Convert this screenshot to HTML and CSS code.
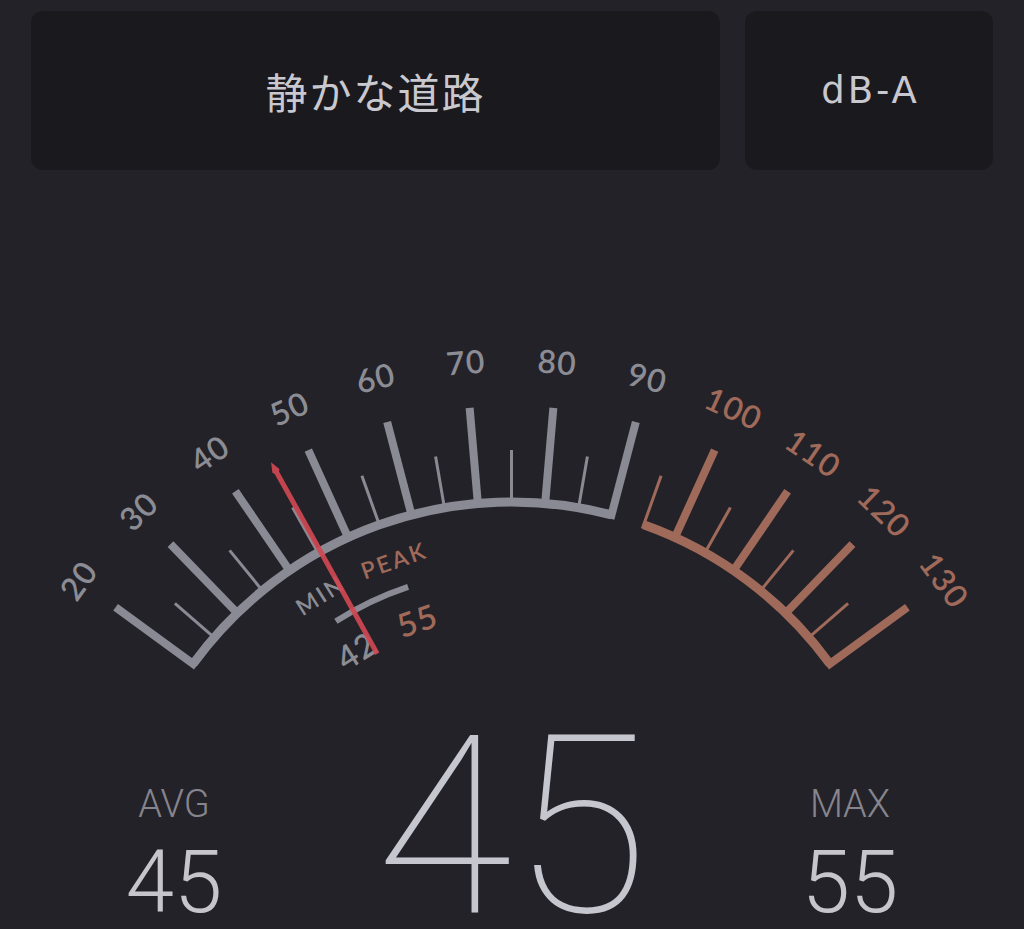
FILE: index.html
```html
<!DOCTYPE html>
<html lang="ja">
<head>
<meta charset="utf-8">
<title>騒音計</title>
<link rel="stylesheet" href="styles.css">
</head>
<body>
<div class="app">
  <header class="top">
    <div class="card place">静かな道路</div>
    <div class="card unit">dB-A</div>
  </header>

  <svg class="gauge" viewBox="0 170 1024 557" width="1024" height="557" xmlns="http://www.w3.org/2000/svg">
    <g class="scale gray">
      <path class="arc" d="M193.1 663.9 A394 394 0 0 1 611.5 514.9"/>
      <line class="major" x1="511.5" y1="506" x2="511.5" y2="406" transform="rotate(-53.9 511.5 896)"/>
      <line class="minor" x1="511.5" y1="506" x2="511.5" y2="450" transform="rotate(-49 511.5 896)"/>
      <line class="major" x1="511.5" y1="506" x2="511.5" y2="406" transform="rotate(-44.1 511.5 896)"/>
      <line class="minor" x1="511.5" y1="506" x2="511.5" y2="450" transform="rotate(-39.2 511.5 896)"/>
      <line class="major" x1="511.5" y1="506" x2="511.5" y2="406" transform="rotate(-34.3 511.5 896)"/>
      <line class="minor" x1="511.5" y1="506" x2="511.5" y2="450" transform="rotate(-29.4 511.5 896)"/>
      <line class="major" x1="511.5" y1="506" x2="511.5" y2="406" transform="rotate(-24.5 511.5 896)"/>
      <line class="minor" x1="511.5" y1="506" x2="511.5" y2="450" transform="rotate(-19.6 511.5 896)"/>
      <line class="major" x1="511.5" y1="506" x2="511.5" y2="406" transform="rotate(-14.7 511.5 896)"/>
      <line class="minor" x1="511.5" y1="506" x2="511.5" y2="450" transform="rotate(-9.8 511.5 896)"/>
      <line class="major" x1="511.5" y1="506" x2="511.5" y2="406" transform="rotate(-4.9 511.5 896)"/>
      <line class="minor" x1="511.5" y1="506" x2="511.5" y2="450"/>
      <line class="major" x1="511.5" y1="506" x2="511.5" y2="406" transform="rotate(4.9 511.5 896)"/>
      <line class="minor" x1="511.5" y1="506" x2="511.5" y2="450" transform="rotate(9.8 511.5 896)"/>
      <line class="major" x1="511.5" y1="506" x2="511.5" y2="406" transform="rotate(14.7 511.5 896)"/>
      <text x="511.5" y="372" transform="rotate(-53.9 511.5 896)">20</text>
      <text x="511.5" y="372" transform="rotate(-44.1 511.5 896)">30</text>
      <text x="511.5" y="372" transform="rotate(-34.3 511.5 896)">40</text>
      <text x="511.5" y="372" transform="rotate(-24.5 511.5 896)">50</text>
      <text x="511.5" y="372" transform="rotate(-14.7 511.5 896)">60</text>
      <text x="511.5" y="372" transform="rotate(-4.9 511.5 896)">70</text>
      <text x="511.5" y="372" transform="rotate(4.9 511.5 896)">80</text>
      <text x="511.5" y="372" transform="rotate(14.7 511.5 896)">90</text>
    </g>
    <g class="scale warm">
      <path class="arc" d="M643.7 524.8 A394 394 0 0 1 829.9 663.9"/>
      <line class="minor" x1="511.5" y1="506" x2="511.5" y2="450" transform="rotate(19.6 511.5 896)"/>
      <line class="major" x1="511.5" y1="506" x2="511.5" y2="406" transform="rotate(24.5 511.5 896)"/>
      <line class="minor" x1="511.5" y1="506" x2="511.5" y2="450" transform="rotate(29.4 511.5 896)"/>
      <line class="major" x1="511.5" y1="506" x2="511.5" y2="406" transform="rotate(34.3 511.5 896)"/>
      <line class="minor" x1="511.5" y1="506" x2="511.5" y2="450" transform="rotate(39.2 511.5 896)"/>
      <line class="major" x1="511.5" y1="506" x2="511.5" y2="406" transform="rotate(44.1 511.5 896)"/>
      <line class="minor" x1="511.5" y1="506" x2="511.5" y2="450" transform="rotate(49 511.5 896)"/>
      <line class="major" x1="511.5" y1="506" x2="511.5" y2="406" transform="rotate(53.9 511.5 896)"/>
      <text x="511.5" y="372" transform="rotate(24.5 511.5 896)">100</text>
      <text x="511.5" y="372" transform="rotate(34.3 511.5 896)">110</text>
      <text x="511.5" y="372" transform="rotate(44.1 511.5 896)">120</text>
      <text x="511.5" y="372" transform="rotate(53.9 511.5 896)">130</text>
    </g>

    <g class="range">
      <path class="range-arc" d="M335.9 621.3 A326 326 0 0 1 408.1 586.9"/>
      <text class="tag gray-t" x="511.5" y="548" transform="rotate(-32.4 511.5 896)">MIN</text>
      <text class="tag warm-t" x="511.5" y="549" transform="rotate(-19.3 511.5 896)">PEAK</text>
      <text class="val gray-t" x="511.5" y="618" transform="rotate(-32.3 511.5 896)">42</text>
      <text class="val warm-t" x="511.5" y="617" transform="rotate(-18.9 511.5 896)">55</text>
    </g>

    <polygon class="needle" points="509 619 514 619 514 412 515.5 410 511.5 400 507.5 410 509 412" transform="rotate(-29 511.5 896)"/>
  </svg>

  <section class="stats">
    <div class="stat">
      <div class="stat-label">AVG</div>
      <div class="stat-value">45</div>
    </div>
    <div class="current">45</div>
    <div class="stat">
      <div class="stat-label">MAX</div>
      <div class="stat-value">55</div>
    </div>
  </section>
</div>
</body>
</html>
```

FILE: styles.css
```css
html, body {
  margin: 0;
  padding: 0;
}

body {
  background: #232228;
  font-family: Roboto, "Liberation Sans", sans-serif;
}

.app {
  display: flex;
  flex-direction: column;
}

.top {
  display: flex;
  gap: 25px;
  padding: 11px 31px 0 31px;
}

.card {
  height: 159px;
  border-radius: 12px;
  background: #1a191e;
  color: #c9c8ce;
  display: flex;
  align-items: center;
  justify-content: center;
}

.place {
  flex: 1;
  font-family: "Noto Sans CJK JP", "Noto Sans", sans-serif;
  font-size: 42px;
  font-weight: 400;
  letter-spacing: 2px;
}

.unit {
  width: 248px;
  font-family: "DejaVu Sans", Roboto, sans-serif;
  font-size: 37px;
  font-weight: 400;
  letter-spacing: 3px;
  padding-left: 3px;
  box-sizing: border-box;
}

.gauge {
  display: block;
}

.scale text {
  font-family: Lato, "Noto Sans", sans-serif;
  font-size: 32px;
  font-weight: 600;
  letter-spacing: 1px;
  text-anchor: middle;
}

.arc {
  fill: none;
  stroke-width: 9;
}

.major {
  stroke-width: 8;
}

.minor {
  stroke-width: 3;
}

.gray .arc, .gray line {
  stroke: #8a8a94;
}

.gray text {
  fill: #8c8c95;
}

.warm .arc, .warm line {
  stroke: #a06a5a;
}

.warm text {
  fill: #a06a5a;
}

.range-arc {
  fill: none;
  stroke: #8a8a94;
  stroke-width: 6;
}

.range text {
  font-family: Lato, "Noto Sans", sans-serif;
  font-weight: 600;
  text-anchor: middle;
}

.tag {
  font-size: 23px;
  letter-spacing: 2.5px;
}

.val {
  font-size: 33px;
  letter-spacing: 1px;
}

.gray-t {
  fill: #8c8c95;
}

.warm-t {
  fill: #a06a5a;
}

.needle {
  fill: #d04852;
  opacity: 0.92;
}

.stats {
  display: grid;
  grid-template-columns: 1fr 328px 1fr;
  align-items: start;
}

.stat {
  display: flex;
  flex-direction: column;
  align-items: center;
  padding-top: 55px;
}

.stat-label {
  font-size: 38px;
  line-height: 44px;
  font-weight: 300;
  color: #86858d;
}

.stat-value {
  margin-top: 11px;
  font-size: 87px;
  line-height: 90px;
  font-weight: 300;
  color: #c6c5cc;
}

.current {
  text-align: center;
  font-size: 249px;
  line-height: 200px;
  font-weight: 100;
  color: #c6c6ce;
}
```
